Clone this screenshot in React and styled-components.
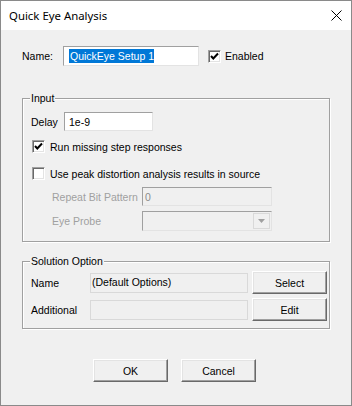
import React from "react";
import styled, { createGlobalStyle } from "styled-components";

const GlobalStyle = createGlobalStyle`
  html, body { margin: 0; padding: 0; background: #f0f0f0; }
  body { font-family: "Liberation Sans", Arial, sans-serif; font-size: 10.5px; color: #000; }
  * { box-sizing: border-box; }
`;

const Window = styled.div`
  width: 352px;
  height: 406px;
  border: 1px solid #8a8a8a;
  background: #f0f0f0;
  display: flex;
  flex-direction: column;
`;

const TitleBar = styled.div`
  height: 29px;
  flex: none;
  background: #fff;
  display: flex;
  align-items: center;
  justify-content: space-between;
  padding: 0 9px 0 8px;
  font-family: "Noto Sans", "Open Sans", sans-serif;
  font-size: 11.4px;
`;

const Body = styled.div`
  flex: 1;
  display: flex;
  flex-direction: column;
  padding: 16px 21px 0 21px;
`;

const Row = styled.div`
  display: flex;
  align-items: center;
  height: ${(p) => p.$h || 20}px;
  margin-top: ${(p) => p.$mt || 0}px;
  margin-left: ${(p) => p.$ml || 0}px;
`;

const Label = styled.span`
  width: ${(p) => p.$w}px;
  flex: none;
  color: ${(p) => (p.$disabled ? "#a0a0a0" : "#000")};
  white-space: nowrap;
`;

const Edit = styled.div`
  width: ${(p) => p.$w}px;
  height: ${(p) => p.$h || 20}px;
  flex: none;
  display: flex;
  align-items: center;
  padding: 0 ${(p) => p.$pad ?? 4}px;
  background: ${(p) => (p.$disabled ? "#f0f0f0" : "#fff")};
  color: ${(p) => (p.$disabled ? "#8c8c8c" : "#000")};
  border-style: solid;
  border-width: 1px;
  border-color: #a0a0a0 #e3e3e3 #e3e3e3 #a0a0a0;
  white-space: nowrap;
  overflow: hidden;
`;

const ReadOnly = styled.div`
  width: ${(p) => p.$w}px;
  height: 20px;
  flex: none;
  padding: 2px 1px 0 1px;
  line-height: 13px;
  border: 1px solid #d9d9d9;
  background: #f0f0f0;
  white-space: nowrap;
`;

const Selected = styled.span`
  background: #0078d7;
  color: #fff;
  line-height: 14px;
  padding: 0 0 0 1px;
`;

const CheckRow = styled.label`
  display: flex;
  align-items: center;
  gap: ${(p) => p.$gap ?? 5}px;
  height: 13px;
  margin-top: ${(p) => p.$mt || 0}px;
  margin-left: ${(p) => p.$ml || 0}px;
  white-space: nowrap;
`;

const Box = styled.span`
  width: 13px;
  height: 13px;
  flex: none;
  display: flex;
  align-items: center;
  justify-content: center;
  background: #fff;
  border-style: solid;
  border-width: 1px;
  border-color: #a0a0a0 #fff #fff #a0a0a0;
  box-shadow: inset 1px 1px 0 #696969, inset -1px -1px 0 #e3e3e3;
`;

const Group = styled.div`
  position: relative;
  border: 1px solid #a0a0a0;
  box-shadow: inset 1px 1px 0 #fff, 1px 1px 0 #fff;
  margin-top: ${(p) => p.$mt}px;
  padding: ${(p) => p.$pad};
  display: flex;
  flex-direction: column;
`;

const Legend = styled.span`
  position: absolute;
  top: -7px;
  left: 7px;
  padding: 0 1px;
  line-height: 13px;
  background: #f0f0f0;
`;

const Button = styled.button`
  width: 75px;
  height: 23px;
  flex: none;
  margin: 0;
  padding: 0;
  font-family: "Liberation Sans", Arial, sans-serif;
  font-size: 10.5px;
  color: #000;
  background: #f0f0f0;
  border-style: solid;
  border-width: 1px;
  border-color: #fff #696969 #696969 #fff;
  box-shadow: inset -1px -1px 0 #a0a0a0, inset 1px 1px 0 #e3e3e3;
  border-radius: 0;
`;

const SolutionRow = styled.div`
  display: flex;
  align-items: center;
  gap: 4px;
  height: 23px;
  margin-top: ${(p) => p.$mt || 0}px;
`;

const Combo = styled.div`
  width: ${(p) => p.$w}px;
  height: 20px;
  flex: none;
  display: flex;
  justify-content: flex-end;
  align-items: center;
  padding-right: 1px;
  background: #f0f0f0;
  border-style: solid;
  border-width: 1px;
  border-color: #a0a0a0 #e3e3e3 #e3e3e3 #a0a0a0;
`;

const DropButton = styled.span`
  width: 17px;
  height: 16px;
  display: flex;
  align-items: center;
  justify-content: center;
  border: 1px solid #d9d9d9;
  background: #f0f0f0;
`;

const Footer = styled.div`
  display: flex;
  justify-content: center;
  gap: 13px;
  margin-top: 30px;
  padding-right: 3px;
`;

const Check = () => (
  <svg width="9" height="9" viewBox="0 0 9 9">
    <polyline points="1,4 3.3,6.5 8,1.5" fill="none" stroke="#000" strokeWidth="2" />
  </svg>
);

const CloseIcon = () => (
  <svg width="11" height="11" viewBox="0 0 11 11">
    <path d="M0.5 0.5 L10.5 10.5 M10.5 0.5 L0.5 10.5" stroke="#000" strokeWidth="1" />
  </svg>
);

export default function App() {
  return (
    <>
      <GlobalStyle />
      <Window>
        <TitleBar>
          <span>Quick Eye Analysis</span>
          <CloseIcon />
        </TitleBar>
        <Body>
          <Row $h={20}>
            <Label $w={41}>Name:</Label>
            <Edit $w={136} $pad={5}>
              <Selected>QuickEye Setup 1</Selected>
            </Edit>
            <CheckRow $ml={9} $gap={4}>
              <Box><Check /></Box>
              Enabled
            </CheckRow>
          </Row>

          <Group $mt={32} $pad="13px 8px 10px 8px">
            <Legend>Input</Legend>
            <Row $h={19}>
              <Label $w={33}>Delay</Label>
              <Edit $w={89} $h={19}>1e-9</Edit>
            </Row>
            <CheckRow $mt={9} $ml={1}>
              <Box><Check /></Box>
              Run missing step responses
            </CheckRow>
            <CheckRow $mt={14} $ml={1}>
              <Box />
              Use peak distortion analysis results in source
            </CheckRow>
            <Row $h={19} $mt={7} $ml={21}>
              <Label $w={90} $disabled>Repeat Bit Pattern</Label>
              <Edit $w={130} $h={19} $pad={2} $disabled>0</Edit>
            </Row>
            <Row $h={20} $mt={5} $ml={21}>
              <Label $w={90} $disabled>Eye Probe</Label>
              <Combo $w={130}>
                <DropButton>
                  <svg width="7" height="4" viewBox="0 0 7 4">
                    <polygon points="0,0 7,0 3.5,4" fill="#a0a0a0" />
                  </svg>
                </DropButton>
              </Combo>
            </Row>
          </Group>

          <Group $mt={19} $pad="9px 1px 7px 8px">
            <Legend>Solution Option</Legend>
            <SolutionRow>
              <Label $w={55}>Name</Label>
              <ReadOnly $w={158}>(Default Options)</ReadOnly>
              <Button>Select</Button>
            </SolutionRow>
            <SolutionRow $mt={4}>
              <Label $w={55}>Additional</Label>
              <ReadOnly $w={158} />
              <Button>Edit</Button>
            </SolutionRow>
          </Group>

          <Footer>
            <Button>OK</Button>
            <Button>Cancel</Button>
          </Footer>
        </Body>
      </Window>
    </>
  );
}
